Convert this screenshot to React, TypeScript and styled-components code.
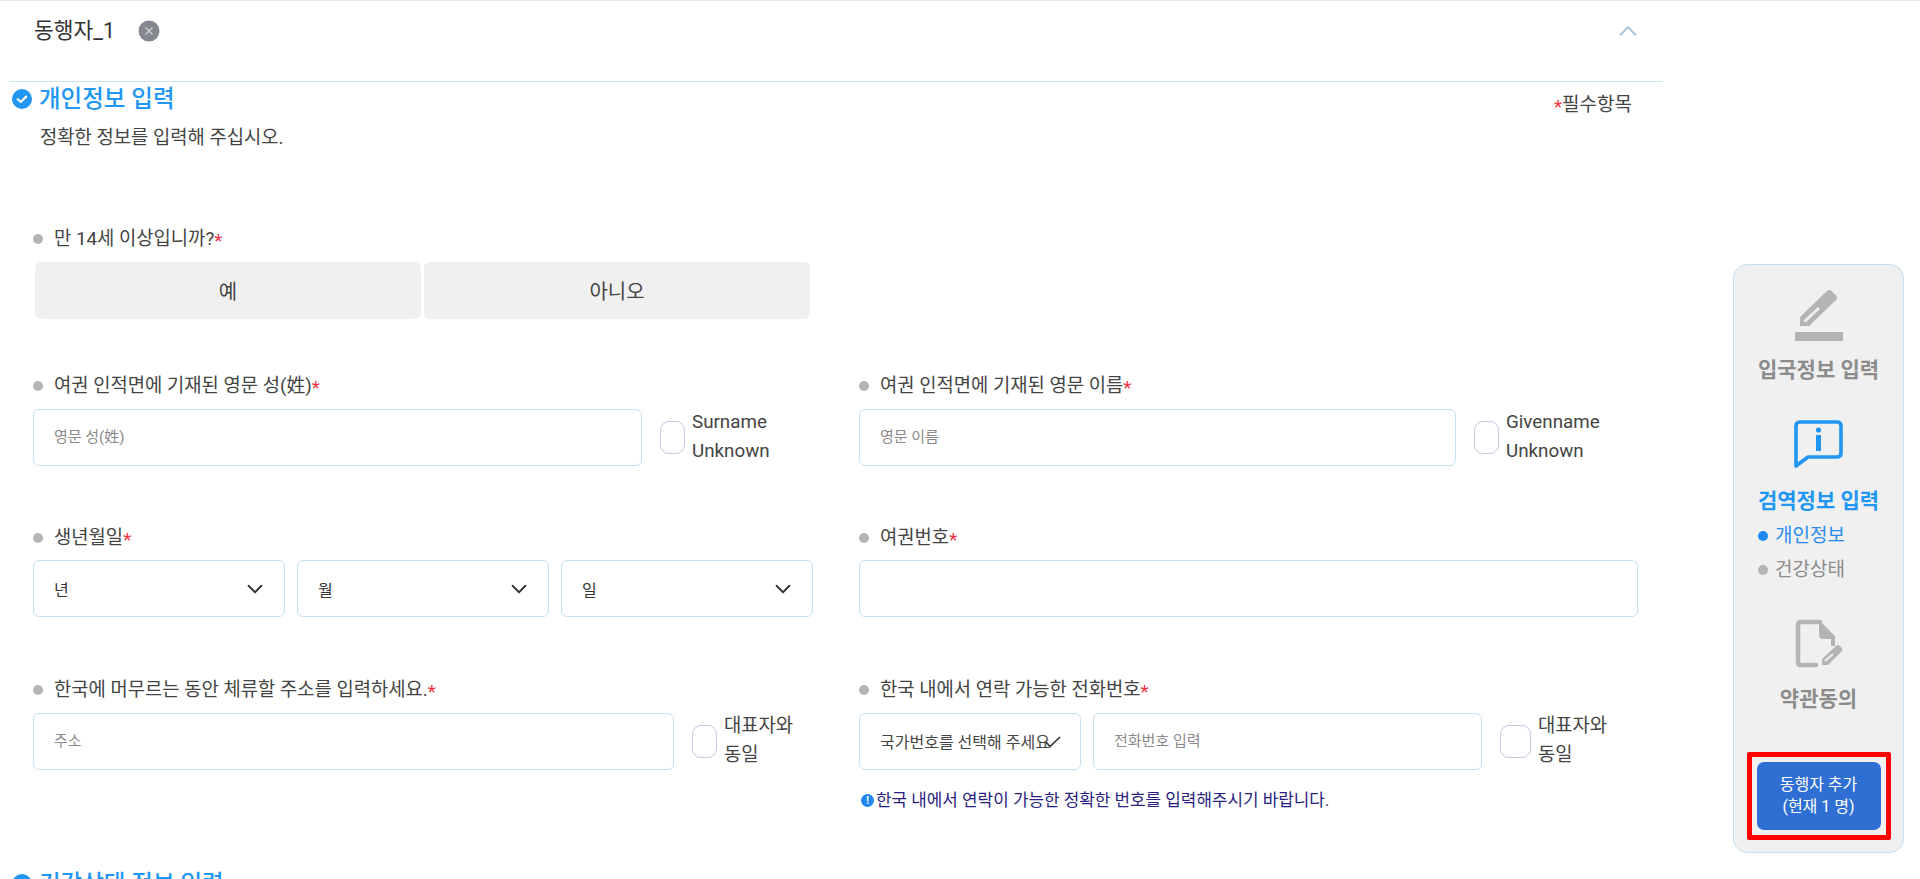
import styled, { createGlobalStyle } from "styled-components";
import { ChevronDown, ChevronUp } from "lucide-react";

const COLORS = {
  BLUE: "#2196f3",
  TEXT: "#333333",
  LINE: "#c6e0ee",
  RED: "#f2323f",
  GREY: "#b4b4b4",
  PANEL: "#f0f0f0",
};

const GlobalStyle = createGlobalStyle`
  html, body {
    margin: 0;
    padding: 0;
    background: #ffffff;
    overflow: hidden;
  }
  body {
    font-family: Roboto, "Noto Sans CJK KR", sans-serif;
    color: ${COLORS.TEXT};
  }
  * {
    box-sizing: border-box;
  }
`;

const CheckCircle = () => (
  <svg width="20" height="20" viewBox="0 0 20 20">
    <circle cx="10" cy="10" r="10" fill={COLORS.BLUE} />
    <path d="M5.8 10.2 L8.8 13 L14.2 7.6" fill="none" stroke="#fff" strokeWidth="2.2" strokeLinecap="round" strokeLinejoin="round" />
  </svg>
);

const CloseCircle = () => (
  <svg width="22" height="22" viewBox="0 0 22 22">
    <circle cx="11" cy="11" r="10.5" fill="#85878f" />
    <path d="M7.5 7.5 L14.5 14.5 M14.5 7.5 L7.5 14.5" stroke="#d4d5d8" strokeWidth="1.2" />
  </svg>
);

const PencilIcon = () => (
  <svg width="48" height="53" viewBox="0 0 48 53">
    <path d="M5 38 L5 29 L32 3 Q34 1 36.5 3 L41 7.5 Q43 10 41 12 L14 38 Z" fill={COLORS.GREY} />
    <path d="M9.5 33.5 L24 20" stroke={COLORS.PANEL} strokeWidth="3" />
    <rect x="0" y="44" width="48" height="9" fill={COLORS.GREY} />
  </svg>
);

const InfoIcon = () => (
  <svg width="49" height="48" viewBox="0 0 49 48">
    <path d="M6 2 H43 Q47 2 47 6 V33 Q47 37 43 37 H14 L2 46 V6 Q2 2 6 2 Z" fill="none" stroke={COLORS.BLUE} strokeWidth="3.6" strokeLinejoin="round" />
    <circle cx="24.5" cy="10" r="2.6" fill={COLORS.BLUE} />
    <rect x="22" y="15" width="5" height="16" fill={COLORS.BLUE} />
  </svg>
);

const DocIcon = () => (
  <svg width="48" height="49" viewBox="0 0 48 49">
    <path d="M25 3 H6 Q3 3 3 6 V43 Q3 46 6 46 H21" fill="none" stroke={COLORS.GREY} strokeWidth="4.5" strokeLinecap="round" />
    <path d="M24 1 L40 17 V27 H36 V20 H28 Q24 20 24 16 Z" fill={COLORS.GREY} />
    <path d="M27 46 L27 40 L41 27 Q43 25 45 27 L47 29 Q48 31 47 32 L33 46 Z" fill={COLORS.GREY} />
    <path d="M30 42 L38 35" stroke={COLORS.PANEL} strokeWidth="2" />
  </svg>
);

const Field = ({ label, children }: { label: string; children: React.ReactNode }) => (
  <div>
    <Label>
      {label}
      <Star>*</Star>
    </Label>
    {children}
  </div>
);

const Check = ({ first, second, width, wide }: { first: string; second: string; width: number; wide?: boolean }) => (
  <CheckLabel $width={width}>
    <CheckBox $wide={wide} />
    <CheckText>
      {first}
      <br />
      {second}
    </CheckText>
  </CheckLabel>
);

const Select = ({ text }: { text: string }) => (
  <SelectBox>
    {text}
    <ChevronDown size={26} strokeWidth={1.7} color="#333" />
  </SelectBox>
);

export default function App() {
  return (
    <Page>
      <GlobalStyle />
      <Main>
        <Header>
          <HeaderTitle>
            동행자_1
            <CloseCircle />
          </HeaderTitle>
          <ChevronUp size={30} strokeWidth={1.6} color="#a9c3da" />
        </Header>

        <SectionHead>
          <CheckCircle />
          <SectionTitle>개인정보 입력</SectionTitle>
          <Required>
            <Star>*</Star>필수항목
          </Required>
        </SectionHead>
        <SectionDesc>정확한 정보를 입력해 주십시오.</SectionDesc>

        <Question>
          <Label>
            만 14세 이상입니까?<Star>*</Star>
          </Label>
          <Choices>
            <Choice>예</Choice>
            <Choice>아니오</Choice>
          </Choices>
        </Question>

        <FormGrid>
          <Field label="여권 인적면에 기재된 영문 성(姓)">
            <InputRow>
              <TextInput placeholder="영문 성(姓)" />
              <Check first="Surname" second="Unknown" width={153} />
            </InputRow>
          </Field>
          <Field label="여권 인적면에 기재된 영문 이름">
            <InputRow>
              <TextInput placeholder="영문 이름" />
              <Check first="Givenname" second="Unknown" width={164} />
            </InputRow>
          </Field>

          <Field label="생년월일">
            <DateRow>
              <Select text="년" />
              <Select text="월" />
              <Select text="일" />
            </DateRow>
          </Field>
          <Field label="여권번호">
            <TextInput />
          </Field>

          <Field label="한국에 머무르는 동안 체류할 주소를 입력하세요.">
            <InputRow>
              <TextInput placeholder="주소" />
              <Check first="대표자와" second="동일" width={121} />
            </InputRow>
          </Field>
          <Field label="한국 내에서 연락 가능한 전화번호">
            <PhoneRow>
              <CountrySelect>
                국가번호를 선택해 주세요
                <CountryMark width="16" height="12" viewBox="0 0 16 12">
                  <path d="M1 6 L5 10.5 L15 1" fill="none" stroke="#333" strokeWidth="1.6" />
                </CountryMark>
              </CountrySelect>
              <TextInput placeholder="전화번호 입력" />
              <Check first="대표자와" second="동일" width={138} wide />
            </PhoneRow>
            <Notice>
              <NoticeIcon>!</NoticeIcon>한국 내에서 연락이 가능한 정확한 번호를 입력해주시기 바랍니다.
            </Notice>
          </Field>
        </FormGrid>

        <NextSection>
          <CheckCircle />
          <SectionTitle>건강상태 정보 입력</SectionTitle>
        </NextSection>
      </Main>

      <SideNav>
        <NavStep>
          <PencilIcon />
          <NavTitle $top={17}>입국정보 입력</NavTitle>
        </NavStep>
        <NavStep $gap={38}>
          <InfoIcon />
          <NavTitle $top={21} $active>
            검역정보 입력
          </NavTitle>
          <SubList>
            <SubItem $active>개인정보</SubItem>
            <SubItem>건강상태</SubItem>
          </SubList>
        </NavStep>
        <NavStep $gap={32}>
          <DocIcon />
          <NavTitle $top={19}>약관동의</NavTitle>
        </NavStep>
        <Highlight>
          <AddButton>
            동행자 추가
            <br />
            (현재 1 명)
          </AddButton>
        </Highlight>
      </SideNav>
    </Page>
  );
}

const Page = styled.div`
  display: flex;
  width: 1920px;
  height: 879px;
  overflow: hidden;
  border-top: 1px solid #e6e6e6;
`;

const Main = styled.div`
  width: 1662px;
  flex-shrink: 0;
`;

const Header = styled.div`
  height: 81px;
  margin-left: 10px;
  padding: 0 19px 21px 24px;
  border-bottom: 1px solid ${COLORS.LINE};
  display: flex;
  align-items: center;
  justify-content: space-between;
`;

const HeaderTitle = styled.div`
  display: flex;
  align-items: center;
  gap: 23px;
  font-size: 21.5px;
  line-height: 30px;
  color: #333;
`;

const SectionHead = styled.div`
  height: 34px;
  padding: 0 30px 0 12px;
  display: flex;
  align-items: center;
  gap: 7px;
`;

const SectionTitle = styled.h2`
  margin: 0;
  font-size: 23.5px;
  font-weight: 500;
  line-height: 34px;
  color: ${COLORS.BLUE};
`;

const Required = styled.div`
  margin-left: auto;
  font-size: 19px;
  color: #444;
  padding-top: 6px;
`;

const SectionDesc = styled.p`
  margin: 9px 0 0 40px;
  font-size: 18.8px;
  line-height: 26px;
  color: #444;
`;

const Star = styled.span`
  position: relative;
  top: 2px;
  color: ${COLORS.RED};
`;

const Label = styled.div`
  position: relative;
  padding-left: 21px;
  margin-bottom: 10px;
  font-size: 18.8px;
  line-height: 24px;
  color: #444;

  &::before {
    content: "";
    position: absolute;
    left: 0;
    top: 7px;
    width: 10px;
    height: 10px;
    border-radius: 50%;
    background: ${COLORS.GREY};
  }
`;

const Question = styled.div`
  margin: 76px 0 0 33px;

  ${Label} {
    margin-bottom: 11px;
  }
`;

const Choices = styled.div`
  display: flex;
  gap: 3px;
  margin-left: 2px;
`;

const Choice = styled.div`
  width: 386px;
  height: 57px;
  border-radius: 6px;
  background: #f0f0f0;
  display: flex;
  align-items: center;
  justify-content: center;
  font-size: 20px;
  color: #444;
`;

const FormGrid = styled.div`
  display: grid;
  grid-template-columns: 780px 779px;
  column-gap: 46px;
  row-gap: 60px;
  margin: 55px 0 0 33px;

  & > div:nth-child(n + 5) {
    margin-top: 1px;
  }
`;

const InputRow = styled.div`
  display: flex;
  align-items: center;
  gap: 18px;
`;

const TextInput = styled.input`
  flex: 1;
  min-width: 0;
  width: 100%;
  height: 57px;
  padding: 0 20px;
  border: 1.5px solid ${COLORS.LINE};
  border-radius: 6px;
  outline: none;
  background: #fff;
  font-family: inherit;
  font-size: 15px;

  &::placeholder {
    color: #8a8a8a;
    opacity: 1;
  }
`;

const CheckLabel = styled.label<{ $width: number }>`
  display: flex;
  align-items: center;
  gap: 7px;
  width: ${(p) => p.$width}px;
  flex-shrink: 0;
`;

const CheckBox = styled.span<{ $wide?: boolean }>`
  width: ${(p) => (p.$wide ? "31px" : "25px")};
  height: 33px;
  flex-shrink: 0;
  border: 1.5px solid #bccbde;
  border-radius: 9px;
  background: #fff;
`;

const CheckText = styled.span`
  font-size: 18.8px;
  line-height: 29px;
  color: #444;
`;

const DateRow = styled.div`
  display: grid;
  grid-template-columns: repeat(3, 252px);
  column-gap: 12px;
`;

const SelectBox = styled.div`
  height: 57px;
  padding: 0 16px 0 20px;
  border: 1.5px solid ${COLORS.LINE};
  border-radius: 6px;
  display: flex;
  align-items: center;
  justify-content: space-between;
  font-size: 16px;
  color: #333;
`;

const PhoneRow = styled.div`
  display: flex;
  align-items: center;
  gap: 12px;

  & > label {
    margin-left: 6px;
  }
`;

const CountrySelect = styled.div`
  position: relative;
  width: 222px;
  height: 57px;
  flex-shrink: 0;
  padding-left: 20px;
  border: 1.5px solid ${COLORS.LINE};
  border-radius: 6px;
  display: flex;
  align-items: center;
  white-space: nowrap;
  overflow: hidden;
  font-size: 16px;
  color: #444;
`;

const CountryMark = styled.svg`
  position: absolute;
  right: 19px;
  top: 22px;
`;

const Notice = styled.div`
  display: flex;
  align-items: center;
  gap: 2px;
  margin-top: 17px;
  padding-left: 2px;
  font-size: 16.9px;
  line-height: 26px;
  color: #2a1f80;
`;

const NoticeIcon = styled.span`
  width: 13px;
  height: 13px;
  border-radius: 50%;
  background: #1e88f0;
  color: #fff;
  font-size: 10px;
  font-weight: 700;
  line-height: 13px;
  text-align: center;
`;

const NextSection = styled.div`
  display: flex;
  align-items: center;
  gap: 7px;
  height: 34px;
  margin-top: 54px;
  padding-left: 12px;
`;

const SideNav = styled.aside`
  width: 171px;
  height: 589px;
  margin: 263px 0 0 71px;
  flex-shrink: 0;
  padding-top: 23px;
  border: 1.5px solid ${COLORS.LINE};
  border-radius: 14px;
  background: ${COLORS.PANEL};
  display: flex;
  flex-direction: column;
  align-items: center;
`;

const NavStep = styled.div<{ $gap?: number }>`
  display: flex;
  flex-direction: column;
  align-items: center;
  width: 100%;
  margin-top: ${(p) => p.$gap ?? 0}px;
`;

const NavTitle = styled.div<{ $active?: boolean; $top: number }>`
  margin-top: ${(p) => p.$top}px;
  font-size: 21px;
  font-weight: 700;
  line-height: 24px;
  color: ${(p) => (p.$active ? COLORS.BLUE : "#8c8c8c")};
`;

const SubList = styled.ul`
  list-style: none;
  align-self: flex-start;
  margin: 6px 0 0;
  padding: 0 0 0 24px;
`;

const SubItem = styled.li<{ $active?: boolean }>`
  position: relative;
  padding-left: 17px;
  font-size: 19px;
  line-height: 34px;
  color: ${(p) => (p.$active ? "#2a8cef" : "#8c8c8c")};

  &::before {
    content: "";
    position: absolute;
    left: 0;
    top: 12px;
    width: 10px;
    height: 10px;
    border-radius: 50%;
    background: ${(p) => (p.$active ? "#1e88f0" : COLORS.GREY)};
  }
`;

const Highlight = styled.div`
  margin-top: auto;
  margin-bottom: 12px;
  width: 144px;
  padding: 5px;
  border: 5px solid #ff0000;
  border-radius: 2px;
`;

const AddButton = styled.button`
  display: block;
  width: 100%;
  height: 68px;
  border: 0;
  border-radius: 7px;
  background: #2f6fd4;
  color: #fff;
  font-family: inherit;
  font-size: 16px;
  line-height: 22px;
`;
